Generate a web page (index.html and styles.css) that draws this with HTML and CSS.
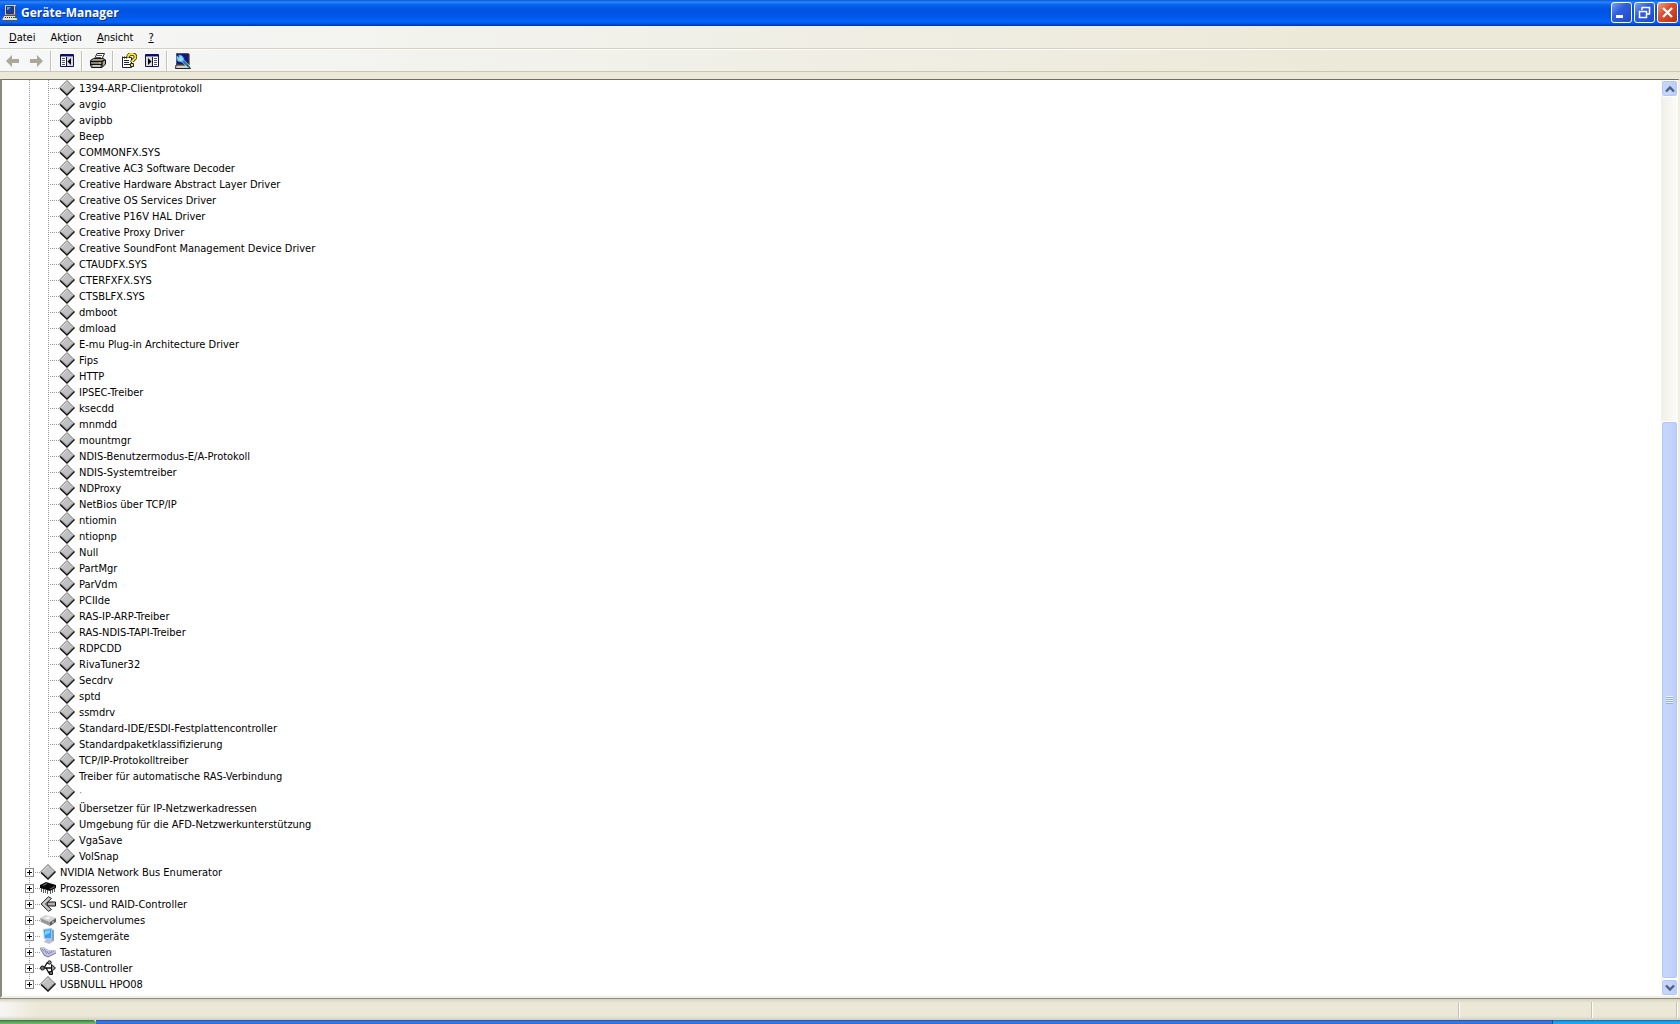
FILE: index.html
```html
<!DOCTYPE html>
<html lang="de">
<head>
<meta charset="utf-8">
<title>Geräte-Manager</title>
<link rel="stylesheet" href="styles.css">
</head>
<body>
<svg class="sprite" aria-hidden="true">
  <symbol id="device" viewBox="0 0 16 16">
    <path d="M8 0.500 15.500 8 8 15.500 0.500 8z" fill="#c0c0c0"/>
    <path d="M.5 8 8 .5 15 7.500" fill="none" stroke="#777"/>
    <path d="M2 8 8 2" fill="none" stroke="#ddd"/>
    <path d="M1 8.500 8 15 15.500 7.500" fill="none" stroke="#111" stroke-width="1.500"/>
    <path d="M2.500 8.500 8 13.500 13.500 8" fill="none" stroke="#808080"/>
  </symbol>
  <symbol id="cpu" viewBox="0 0 16 16">
    <path d="M0 5 6 2 16 5V8L10 11 0 8z" fill="#080808"/>
    <path d="M1.500 8v4M3.500 9v4M5.500 10v3M7.500 10v4M10.500 10v4M12.500 9v4M14.500 8v4" stroke="#333" stroke-width=".8" fill="none"/>
    <path d="M3 5.500 7 3.500M10 9 15 6.500" stroke="#777"/>
  </symbol>
  <symbol id="scsi" viewBox="0 0 16 16">
    <path d="M8.500 .7 1 8 8.500 15.300 11.500 13.500 5.500 8 11.500 2.500z" fill="#c4c4c4" stroke="#111" stroke-width=".9"/>
    <path d="M8 6H15.500V10H8L7 8z" fill="#b0b0b0" stroke="#111"/>
  </symbol>
  <symbol id="volume" viewBox="0 0 16 16">
    <path d="M0 6 6 3 16 6 10 10z" fill="#d2d2d2"/>
    <path d="M0 6 10 10V14L1 10z" fill="#999"/>
    <path d="M10 10 16 6V10L10 14z" fill="#606060"/>
    <path d="M4 6 8 4.500 11 6 8 7.500z" fill="#f4f4f4"/>
    <path d="M12 10h2" stroke="#e8f8e8"/>
  </symbol>
  <symbol id="system" viewBox="0 0 16 16">
    <path d="M11 1 14 2V13L11 14z" fill="#8f9fc0"/>
    <path d="M3 1 12 0V11L4 11z" fill="#9cc8f4"/>
    <path d="M4 2 11 1V10L5 10z" fill="#36a0f8"/>
    <path d="M5 3 10 2V5L5 7z" fill="#7ccfff"/>
    <path d="M6 11h5l3 2-5 3-5-2z" fill="#b8c0d8"/>
  </symbol>
  <symbol id="keyboard" viewBox="0 0 16 16">
    <path d="M0 3 4 3 9 6 16 6V9L8 13 4 12z" fill="#c4c4e4"/>
    <path d="M0 4 4 11 8 13 16 9" fill="none" stroke="#777799"/>
    <path d="M2 5 7 10M4 5 9 10M5 8 6 7M8 10 14 7M7 8h5" stroke="#77779f" stroke-dasharray="1 1"/>
  </symbol>
  <symbol id="usb" viewBox="0 0 16 16">
    <path d="M2 8H14M4 8 7 3H9M6 8 9 13H11" fill="none" stroke="#111" stroke-width="1.300"/>
    <circle cx="2.500" cy="8" r="2" fill="#777" stroke="#111"/>
    <path d="M11.500 4.500 15.500 8 11.500 11.500z" fill="#999" stroke="#111"/>
    <circle cx="9.500" cy="2.500" r="1.700" fill="#999" stroke="#111"/>
    <path d="M9.500 11.500h3v3h-3z" fill="#666" stroke="#111"/>
  </symbol>
  <symbol id="computer" viewBox="0 0 16 16">
    <path d="M3 0H14V10H3z" fill="#d4d0c8"/><path d="M4.500 1.500H11.500V8.500H4.500z" fill="#123caf" stroke="#333"/>
    <path d="M5 2h4L6 5H5z" fill="#4fa0ff"/><path d="M13.500 1V10H4" fill="none" stroke="#555"/>
    <path d="M2 10.500H13L15.500 14V15.500H0V14z" fill="#e4e1d8" stroke="#555"/>
    <path d="M3 12.500H11" stroke="#222" stroke-dasharray="1 1"/><path d="M11 12.500h3" stroke="#080"/>
  </symbol>
  <symbol id="arrow" viewBox="0 0 14 12">
    <path d="M0 6 6 0V4H13V8H6V12z" fill="#aca899"/>
  </symbol>
  <symbol id="pane-left" viewBox="0 0 14 14">
    <path d="M.5 .5H13.500V12.500H.5z" fill="#fff" stroke="#10106a"/><path d="M1 1.500H13" stroke="#10106a" stroke-width="2"/>
    <path d="M6.500 3V12" stroke="#10106a"/><path d="M2 4.500h3M2 6.500h3M2 8.500h3M2 10.500h3" stroke="#555"/>
    <path d="M7 3H13V12H7z" fill="#dedbd0"/><path d="M11 4V11L7.500 7.500z" fill="#000"/>
  </symbol>
  <symbol id="pane-right" viewBox="0 0 14 14">
    <path d="M.5 .5H13.500V12.500H.5z" fill="#fff" stroke="#10106a"/><path d="M1 1.500H13" stroke="#10106a" stroke-width="2"/>
    <path d="M7.500 3V12" stroke="#10106a"/><path d="M9 4.500h3M9 6.500h3M9 8.500h3M9 10.500h3" stroke="#555"/>
    <path d="M1 3H7V12H1z" fill="#dedbd0"/><path d="M3 4V11L6.500 7.500z" fill="#000"/>
  </symbol>
  <symbol id="printer" viewBox="0 0 16 16">
    <path d="M4.500 6 7 .5H14.500L12 6z" fill="#fff" stroke="#222"/><path d="M7 2.500h5M6 4.500h5" stroke="#555"/>
    <path d="M.5 7.500 3.500 5.500H13L15.500 7V11L12 14.500H1.500L.5 12z" fill="#aaa89e" stroke="#111"/>
    <path d="M1 8.500H12L15 6.500M1 11.500H12M12 8.500V14" fill="none" stroke="#111" stroke-width="1.300"/>
    <path d="M3 12.800h7" stroke="#eee"/><path d="M9 10h2" stroke="#dd0"/>
  </symbol>
  <symbol id="help" viewBox="0 0 16 16">
    <path d="M1.500 4.500H10.500V14.500H1.500z" fill="#fff" stroke="#222"/>
    <path d="M3 7.500h5M3 9.500h5M3 11.500h6" stroke="#223"/><path d="M1 4.500h5" stroke="#222" stroke-width="2" stroke-dasharray="1 1"/>
    <path d="M7 4.500C7 0 14.500 0 14.500 4 14.500 6.500 11 6.500 11 9" fill="none" stroke="#222" stroke-width="3.500"/>
    <path d="M7 4.500C7 0 14.500 0 14.500 4 14.500 6.500 11 6.500 11 9" fill="none" stroke="#ffe51f" stroke-width="2"/>
    <path d="M9.500 10.500h3v3h-3z" fill="#ffe51f" stroke="#222"/>
  </symbol>
  <symbol id="scan" viewBox="0 0 16 16">
    <path d="M1.500 .5H13.500V11.500H1.500z" fill="#14148a" stroke="#555"/><path d="M14 1V12" stroke="#111"/>
    <path d="M1 12H13L15.500 15.500H.5z" fill="#d4d0c8" stroke="#222"/>
    <path d="M7 7 13 13" stroke="#d9f6ff" stroke-width="3"/><path d="M8 8 14 14" stroke="#16738b" stroke-width="2"/>
    <path d="M2 3 4 5V2L7 3 9 6 7 9 3 8 2 6z" fill="#8ed8f2" stroke="#4fa8d8"/>
  </symbol>
  <symbol id="chevron" viewBox="0 0 10 8">
    <path d="M1 6.500 5 2.500 9 6.500" fill="none" stroke="#4d6185" stroke-width="2.400"/>
  </symbol>
</svg>

<header class="titlebar">
  <svg class="icon"><use href="#computer"/></svg>
  <h1>Geräte-Manager</h1>
  <div class="window-buttons">
    <button type="button" aria-label="Minimieren"><svg viewBox="0 0 19 19"><path d="M4 13.500h7" stroke="#fff" stroke-width="3"/></svg></button>
    <button type="button" aria-label="Wiederherstellen"><svg viewBox="0 0 19 19"><path d="M7 7V4.500H14.500V11H12M4.500 8.500H11.500V14.500H4.500zM7 4.500H15M4 8.500H12" fill="none" stroke="#fff" stroke-width="1.500"/></svg></button>
    <button type="button" class="close" aria-label="Schließen"><svg viewBox="0 0 19 19"><path d="M5 5 14 14M14 5 5 14" stroke="#fff" stroke-width="2.300"/></svg></button>
  </div>
</header>

<nav class="menubar">
  <button type="button"><u>D</u>atei</button>
  <button type="button">Ak<u>t</u>ion</button>
  <button type="button"><u>A</u>nsicht</button>
  <button type="button"><u>?</u></button>
</nav>

<div class="toolbar" role="toolbar">
  <button type="button" disabled aria-label="Zurück"><svg class="arrow"><use href="#arrow"/></svg></button>
  <button type="button" disabled aria-label="Vorwärts"><svg class="arrow forward"><use href="#arrow"/></svg></button>
  <span class="divider"></span>
  <button type="button" aria-label="Konsolenstruktur"><svg class="pane"><use href="#pane-left"/></svg></button>
  <span class="divider"></span>
  <button type="button" aria-label="Drucken"><svg class="icon"><use href="#printer"/></svg></button>
  <span class="divider"></span>
  <button type="button" aria-label="Hilfe"><svg class="icon"><use href="#help"/></svg></button>
  <button type="button" aria-label="Aktionsbereich"><svg class="pane"><use href="#pane-right"/></svg></button>
  <span class="divider"></span>
  <button type="button" aria-label="Nach geänderter Hardware suchen"><svg class="icon"><use href="#scan"/></svg></button>
</div>

<main class="view">
  <div class="tree">
    <ul class="drivers">
      <li><svg class="icon"><use href="#device"/></svg>1394-ARP-Clientprotokoll</li>
      <li><svg class="icon"><use href="#device"/></svg>avgio</li>
      <li><svg class="icon"><use href="#device"/></svg>avipbb</li>
      <li><svg class="icon"><use href="#device"/></svg>Beep</li>
      <li><svg class="icon"><use href="#device"/></svg>COMMONFX.SYS</li>
      <li><svg class="icon"><use href="#device"/></svg>Creative AC3 Software Decoder</li>
      <li><svg class="icon"><use href="#device"/></svg>Creative Hardware Abstract Layer Driver</li>
      <li><svg class="icon"><use href="#device"/></svg>Creative OS Services Driver</li>
      <li><svg class="icon"><use href="#device"/></svg>Creative P16V HAL Driver</li>
      <li><svg class="icon"><use href="#device"/></svg>Creative Proxy Driver</li>
      <li><svg class="icon"><use href="#device"/></svg>Creative SoundFont Management Device Driver</li>
      <li><svg class="icon"><use href="#device"/></svg>CTAUDFX.SYS</li>
      <li><svg class="icon"><use href="#device"/></svg>CTERFXFX.SYS</li>
      <li><svg class="icon"><use href="#device"/></svg>CTSBLFX.SYS</li>
      <li><svg class="icon"><use href="#device"/></svg>dmboot</li>
      <li><svg class="icon"><use href="#device"/></svg>dmload</li>
      <li><svg class="icon"><use href="#device"/></svg>E-mu Plug-in Architecture Driver</li>
      <li><svg class="icon"><use href="#device"/></svg>Fips</li>
      <li><svg class="icon"><use href="#device"/></svg>HTTP</li>
      <li><svg class="icon"><use href="#device"/></svg>IPSEC-Treiber</li>
      <li><svg class="icon"><use href="#device"/></svg>ksecdd</li>
      <li><svg class="icon"><use href="#device"/></svg>mnmdd</li>
      <li><svg class="icon"><use href="#device"/></svg>mountmgr</li>
      <li><svg class="icon"><use href="#device"/></svg>NDIS-Benutzermodus-E/A-Protokoll</li>
      <li><svg class="icon"><use href="#device"/></svg>NDIS-Systemtreiber</li>
      <li><svg class="icon"><use href="#device"/></svg>NDProxy</li>
      <li><svg class="icon"><use href="#device"/></svg>NetBios über TCP/IP</li>
      <li><svg class="icon"><use href="#device"/></svg>ntiomin</li>
      <li><svg class="icon"><use href="#device"/></svg>ntiopnp</li>
      <li><svg class="icon"><use href="#device"/></svg>Null</li>
      <li><svg class="icon"><use href="#device"/></svg>PartMgr</li>
      <li><svg class="icon"><use href="#device"/></svg>ParVdm</li>
      <li><svg class="icon"><use href="#device"/></svg>PCIIde</li>
      <li><svg class="icon"><use href="#device"/></svg>RAS-IP-ARP-Treiber</li>
      <li><svg class="icon"><use href="#device"/></svg>RAS-NDIS-TAPI-Treiber</li>
      <li><svg class="icon"><use href="#device"/></svg>RDPCDD</li>
      <li><svg class="icon"><use href="#device"/></svg>RivaTuner32</li>
      <li><svg class="icon"><use href="#device"/></svg>Secdrv</li>
      <li><svg class="icon"><use href="#device"/></svg>sptd</li>
      <li><svg class="icon"><use href="#device"/></svg>ssmdrv</li>
      <li><svg class="icon"><use href="#device"/></svg>Standard-IDE/ESDI-Festplattencontroller</li>
      <li><svg class="icon"><use href="#device"/></svg>Standardpaketklassifizierung</li>
      <li><svg class="icon"><use href="#device"/></svg>TCP/IP-Protokolltreiber</li>
      <li><svg class="icon"><use href="#device"/></svg>Treiber für automatische RAS-Verbindung</li>
      <li><svg class="icon"><use href="#device"/></svg><span class="faint">·</span></li>
      <li><svg class="icon"><use href="#device"/></svg>Übersetzer für IP-Netzwerkadressen</li>
      <li><svg class="icon"><use href="#device"/></svg>Umgebung für die AFD-Netzwerkunterstützung</li>
      <li><svg class="icon"><use href="#device"/></svg>VgaSave</li>
      <li><svg class="icon"><use href="#device"/></svg>VolSnap</li>
    </ul>
    <ul class="classes">
      <li><button type="button" class="expand" aria-label="Erweitern"></button><svg class="icon"><use href="#device"/></svg>NVIDIA Network Bus Enumerator</li>
      <li><button type="button" class="expand" aria-label="Erweitern"></button><svg class="icon"><use href="#cpu"/></svg>Prozessoren</li>
      <li><button type="button" class="expand" aria-label="Erweitern"></button><svg class="icon"><use href="#scsi"/></svg>SCSI- und RAID-Controller</li>
      <li><button type="button" class="expand" aria-label="Erweitern"></button><svg class="icon"><use href="#volume"/></svg>Speichervolumes</li>
      <li><button type="button" class="expand" aria-label="Erweitern"></button><svg class="icon"><use href="#system"/></svg>Systemgeräte</li>
      <li><button type="button" class="expand" aria-label="Erweitern"></button><svg class="icon"><use href="#keyboard"/></svg>Tastaturen</li>
      <li><button type="button" class="expand" aria-label="Erweitern"></button><svg class="icon"><use href="#usb"/></svg>USB-Controller</li>
      <li><button type="button" class="expand" aria-label="Erweitern"></button><svg class="icon"><use href="#device"/></svg>USBNULL HPO08</li>
    </ul>
  </div>
  <div class="scrollbar">
    <button type="button" class="step" aria-label="Nach oben"><svg><use href="#chevron"/></svg></button>
    <div class="track"></div>
    <div class="thumb"><span class="grip"></span></div>
    <button type="button" class="step down" aria-label="Nach unten"><svg><use href="#chevron"/></svg></button>
  </div>
</main>

<footer class="statusbar"><span class="pane-main"></span><span class="pane-mid"></span><span class="pane-end"></span></footer>
<div class="taskbar"><span class="start"></span><span class="tasks"></span><span class="tray"></span></div>
</body>
</html>
```
FILE: styles.css
```css
* { box-sizing: border-box; }

body {
  margin: 0;
  height: 100vh;
  display: flex;
  flex-direction: column;
  overflow: hidden;
  background: #ece9d8;
  color: #000;
  font: 11px/18px "DejaVu Sans Condensed", "DejaVu Sans", sans-serif;
}

button {
  margin: 0;
  padding: 0;
  border: 0;
  background: none;
  color: inherit;
  font: inherit;
}

ul { margin: 0; padding: 0; list-style: none; }
svg { display: block; flex: none; }
.sprite { position: absolute; width: 0; height: 0; }
.icon { width: 16px; height: 16px; }

/* Title bar */
.titlebar {
  flex: none;
  height: 26px;
  display: flex;
  align-items: center;
  gap: 3px;
  padding: 0 2px 1px;
  background: linear-gradient(#0a56d8 0, #2a86fb 2px, #0660ec 5px, #0054e3 10px, #0058ea 17px, #0465fc 22px, #0050d8 24px, #0036a8 26px);
}
.titlebar h1 {
  flex: 1;
  margin: 0;
  color: #fff;
  font: bold 12px/26px "Open Sans", sans-serif;
  text-shadow: 1px 1px 0 #0a2f8c;
}
.window-buttons { display: flex; gap: 2px; }
.window-buttons button {
  width: 21px;
  height: 21px;
  border: 1px solid #fff;
  border-radius: 3px;
  background: linear-gradient(135deg, #7f9ff0, #2f5fe0 40%, #1b48c8);
}
.window-buttons .close { background: linear-gradient(135deg, #f0a088, #dc5030 40%, #b8300c); }

/* Menu and toolbar */
.menubar, .toolbar {
  flex: none;
  display: flex;
  align-items: center;
  background: linear-gradient(90deg, #f6f7f8, #f1f0e8 40%, #ece9d8 80%);
}
.menubar {
  height: 23px;
  gap: 15px;
  padding: 1px 9px 0;
  border-bottom: 1px solid #d6d2c2;
}
.toolbar {
  height: 23px;
  padding: 0 1px;
  border-top: 1px solid #fff;
  border-bottom: 1px solid #cbc7b8;
}
.toolbar button { width: 23px; height: 20px; display: grid; place-items: center; }
.toolbar .divider { width: 2px; height: 20px; margin: 0 3px; border-left: 1px solid #c5c2b5; border-right: 1px solid #fff; }
.arrow { width: 14px; height: 12px; }
.forward { transform: rotate(180deg); }
.pane { width: 14px; height: 14px; }

/* Device tree */
.view {
  flex: 1;
  min-height: 0;
  display: flex;
  margin-top: 7px;
  border: solid;
  border-width: 1px 2px 2px;
  border-color: #716f64 #f1efe2 #f1efe2 #8c8a7c;
  background: #fff;
}
.tree { flex: 1; min-width: 0; overflow: hidden; }
.tree li { display: flex; gap: 4px; height: 16px; white-space: nowrap; background-repeat: no-repeat; }
.tree li {
  --dots-down: repeating-linear-gradient(#999 0 1px, transparent 1px 2px);
  --dots-across: repeating-linear-gradient(90deg, #999 0 1px, transparent 1px 2px);
}
.drivers li {
  padding-left: 57px;
  background-image: var(--dots-down), var(--dots-down), var(--dots-across);
  background-position: 27px 0, 46px 0, 46px 8px;
  background-size: 1px 16px, 1px 16px, 11px 1px;
}
.drivers li:last-child { background-size: 1px 16px, 1px 8px, 11px 1px; }
.faint { color: #888; }
.classes li {
  padding-left: 23px;
  background-image: var(--dots-down), var(--dots-across);
  background-position: 27px 0, 27px 8px;
  background-size: 1px 16px, 11px 1px;
}
.classes li:last-child { background-size: 1px 8px, 11px 1px; }
.expand {
  width: 9px;
  height: 9px;
  margin: 4px 2px 0 0;
  border: 1px solid #888;
  background:
    linear-gradient(#000, #000) center / 5px 1px no-repeat,
    linear-gradient(#000, #000) center / 1px 5px no-repeat,
    #fff;
}

/* Scroll bar */
.scrollbar { flex: none; width: 17px; display: flex; flex-direction: column; background: linear-gradient(90deg, #f0efe8, #fdfdfa); }
.step, .thumb {
  border: 1px solid #fff;
  border-radius: 3px;
  box-shadow: inset 0 0 0 1px #b4c8f4;
  background: linear-gradient(90deg, #c8d6fb, #c2d4fe 60%, #b8cbf6);
}
.step { flex: none; height: 17px; display: grid; place-items: center; }
.step svg { width: 10px; height: 8px; }
.down svg { transform: rotate(180deg); }
.track { flex: 324; }
.thumb { flex: 556; display: grid; place-items: center; }
.grip { width: 7px; height: 8px; background: repeating-linear-gradient(#eef4fe 0 1px, #8cb0f8 1px 2px); }

/* Status bar and the top edge of the task bar */
.statusbar {
  flex: none;
  display: flex;
  height: 22px;
  padding: 3px 2px 2px 0;
  border-top: 1px solid #8f8c80;
  background: linear-gradient(#d5d2c3, transparent 4px, transparent 17px, #d2cfc2), linear-gradient(90deg, #f6f6f4, #ebe8d7 40px);
}
.statusbar span { border-right: 1px solid #fff; box-shadow: inset -1px 0 #c5c2b2; }
.pane-main { flex: 1; }
.pane-mid { width: 133px; }
.pane-end { width: 85px; }
.taskbar { flex: none; display: flex; height: 4px; }
.start { width: 96px; border-radius: 0 4px 0 0; background: linear-gradient(#2f7a34, #6db46c 3px); }
.tasks { flex: 1; background: linear-gradient(#1d4aa8, #3f80e8 2px, #2a66d8); }
.tray { width: 128px; border-left: 1px solid #0c4a8c; background: linear-gradient(#0c6cb8, #1ca4f0 2px); }
```
